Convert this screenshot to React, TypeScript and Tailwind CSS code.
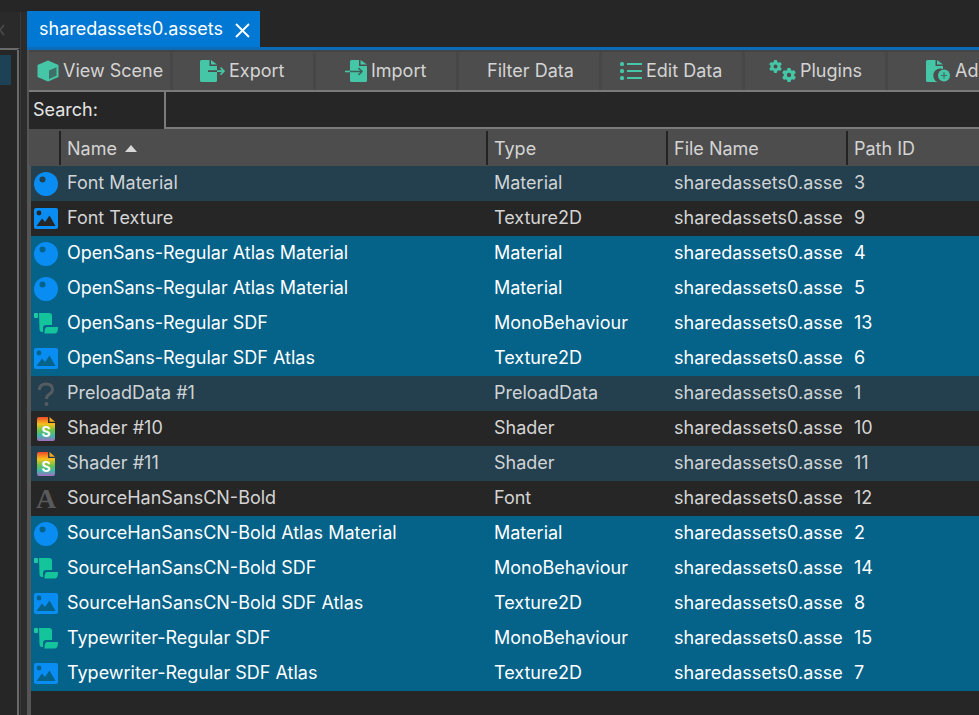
import React from "react";
import { FaGear } from "react-icons/fa6";

const G = "#45c7a7";
const BAR = "#4d4d4d";

const Cube = () => (
  <svg width="22" height="22" viewBox="0 0 22 22" className="shrink-0">
    <path d="M11 0.5 L21.5 5 V17 L11 21.5 L0.5 17 V5 Z" fill={G} />
    <path d="M12 10.5 L19.5 7.2 V15.8 L12 19 Z" fill="#3f6f66" />
  </svg>
);
const FileExport = () => (
  <svg width="25" height="22" viewBox="0 0 25 22" className="shrink-0">
    <path d="M0 1.5 A1.5 1.5 0 0 1 1.5 0 H9.5 V6 H17 V10.3 H8 V11.9 H17 V20.5 A1.5 1.5 0 0 1 15.5 22 H1.5 A1.5 1.5 0 0 1 0 20.5 Z" fill={G} />
    <path d="M11 0 L17 4.6 H11 Z" fill={G} />
    <path d="M17 11.1 H24 M20.5 7.6 L24 11.1 L20.5 14.6" stroke={G} strokeWidth="1.6" fill="none" />
  </svg>
);
const FileImport = () => (
  <svg width="22" height="22" viewBox="0 0 22 22" className="shrink-0">
    <path d="M5 1.5 A1.5 1.5 0 0 1 6.5 0 H14 V6 H22 V20.5 A1.5 1.5 0 0 1 20.5 22 H6.5 A1.5 1.5 0 0 1 5 20.5 Z" fill={G} />
    <path d="M15.5 0 L22 4.6 H15.5 Z" fill={G} />
    <path d="M5 11.5 H17 M13.5 8 L17 11.5 L13.5 15" stroke="#3f5f58" strokeWidth="1.6" fill="none" />
    <path d="M0 11.5 H5" stroke={G} strokeWidth="1.6" />
  </svg>
);
const ListIcon = () => (
  <svg width="22" height="18" viewBox="0 0 22 18" className="shrink-0">
    <rect x="0" y="0" width="4" height="4" rx="1.5" fill={G} />
    <rect x="0" y="7" width="4" height="4" rx="1.5" fill={G} />
    <rect x="0" y="14" width="4" height="4" rx="1.5" fill={G} />
    <rect x="7" y="1" width="15" height="2" fill={G} />
    <rect x="7" y="8" width="15" height="2" fill={G} />
    <rect x="7" y="15" width="15" height="2" fill={G} />
  </svg>
);
const Gears = () => (
  <span className="relative block h-[24px] w-[28px] shrink-0" style={{ color: G }}>
    <FaGear size={13} className="absolute left-0 top-[1px]" />
    <FaGear size={14} className="absolute left-[13px] top-[9px]" />
  </span>
);
const FileAdd = () => (
  <svg width="25" height="22" viewBox="0 0 25 22" className="shrink-0">
    <path d="M0 1.5 A1.5 1.5 0 0 1 1.5 0 H9.5 V6 H17 V9 A6.5 6.5 0 0 0 11.5 22 H1.5 A1.5 1.5 0 0 1 0 20.5 Z" fill={G} />
    <path d="M11 0 L17 4.6 H11 Z" fill={G} />
    <circle cx="18" cy="15.5" r="6" fill={G} />
    <path d="M18 12.3 V18.7 M14.8 15.5 H21.2" stroke="#3f6f66" strokeWidth="1.2" />
  </svg>
);

const MaterialIcon = ({ bg }: { bg: string }) => (
  <svg width="24" height="24" viewBox="0 0 24 24">
    <circle cx="12" cy="12" r="12" fill="#0a8df2" />
    <circle cx="8.5" cy="7.5" r="3" fill={bg} />
  </svg>
);
const ImageIcon = ({ bg }: { bg: string }) => (
  <svg width="24" height="21" viewBox="0 0 24 21">
    <rect width="24" height="21" rx="2" fill="#0a8df2" />
    <circle cx="5" cy="5" r="2.4" fill={bg} />
    <path d="M2.5 18 L8 10.5 L11 14 L15.5 7.5 L21.5 18 Z" fill={bg} />
  </svg>
);
const ScriptIcon = () => (
  <svg width="24" height="21" viewBox="0 0 24 21">
    <rect x="0" y="0" width="4" height="5" rx="1" fill="#1fc7a3" />
    <path d="M5 0 H15 Q18 0 18 3 V12 H12 Q9 12 9 15 V19 H8 Q5.5 19 5.5 16 Z" fill="#14c59c" />
    <path d="M10.5 20.5 Q10.5 14 13 14 H24 Q24 20 21 20.5 Z" fill="#14c59c" />
  </svg>
);
const UnknownIcon = () => (
  <svg width="24" height="24" viewBox="0 0 24 24">
    <path d="M5.5 8 Q5.5 2 12 2 Q18.5 2 18.5 7.5 Q18.5 10.5 15 12.5 Q12.5 13.8 12.5 17" fill="none" stroke="#555c61" strokeWidth="3" />
    <circle cx="12.5" cy="22" r="2" fill="#555c61" />
  </svg>
);
const ShaderIcon = ({ id }: { id: string }) => (
  <svg width="18" height="24" viewBox="0 0 18 24">
    <defs>
      <linearGradient id={id} x1="0" y1="0" x2="0" y2="1">
        <stop offset="0" stopColor="#ef4a2a" />
        <stop offset="0.3" stopColor="#f5c21c" />
        <stop offset="0.55" stopColor="#6cc24a" />
        <stop offset="0.78" stopColor="#3fb6a8" />
        <stop offset="1" stopColor="#a66cc0" />
      </linearGradient>
    </defs>
    <path d="M0 2 A2 2 0 0 1 2 0 H11 V6 H18 V22 A2 2 0 0 1 16 24 H2 A2 2 0 0 1 0 22 Z" fill={`url(#${id})`} />
    <path d="M12.5 0 L18 4.8 H12.5 Z" fill="#f2a71e" />
    <text x="9" y="20" fontSize="14" fontWeight="700" textAnchor="middle" fill="#fff" fontFamily="Inter, sans-serif">S</text>
  </svg>
);
const FontIcon = () => (
  <span
    className="block w-[24px] text-center text-[28px] font-bold leading-[24px] text-[#5a5a5a]"
    style={{ fontFamily: "'Liberation Serif', serif" }}
  >
    A
  </span>
);

type Kind = "mat" | "img" | "script" | "q" | "shader" | "font";
type Row = { name: string; type: string; id: string; kind: Kind; sel: boolean; alt?: boolean };

const rows: Row[] = [
  { name: "Font Material", type: "Material", id: "3", kind: "mat", sel: false, alt: true },
  { name: "Font Texture", type: "Texture2D", id: "9", kind: "img", sel: false },
  { name: "OpenSans-Regular Atlas Material", type: "Material", id: "4", kind: "mat", sel: true },
  { name: "OpenSans-Regular Atlas Material", type: "Material", id: "5", kind: "mat", sel: true },
  { name: "OpenSans-Regular SDF", type: "MonoBehaviour", id: "13", kind: "script", sel: true },
  { name: "OpenSans-Regular SDF Atlas", type: "Texture2D", id: "6", kind: "img", sel: true },
  { name: "PreloadData #1", type: "PreloadData", id: "1", kind: "q", sel: false, alt: true },
  { name: "Shader #10", type: "Shader", id: "10", kind: "shader", sel: false },
  { name: "Shader #11", type: "Shader", id: "11", kind: "shader", sel: false, alt: true },
  { name: "SourceHanSansCN-Bold", type: "Font", id: "12", kind: "font", sel: false },
  { name: "SourceHanSansCN-Bold Atlas Material", type: "Material", id: "2", kind: "mat", sel: true },
  { name: "SourceHanSansCN-Bold SDF", type: "MonoBehaviour", id: "14", kind: "script", sel: true },
  { name: "SourceHanSansCN-Bold SDF Atlas", type: "Texture2D", id: "8", kind: "img", sel: true },
  { name: "Typewriter-Regular SDF", type: "MonoBehaviour", id: "15", kind: "script", sel: true },
  { name: "Typewriter-Regular SDF Atlas", type: "Texture2D", id: "7", kind: "img", sel: true },
];

const RowIcon = ({ row, idx }: { row: Row; idx: number }) => {
  const bg = row.sel ? "#056289" : row.alt ? "#243f4e" : "#262626";
  switch (row.kind) {
    case "mat":
      return <MaterialIcon bg={bg} />;
    case "img":
      return <ImageIcon bg={bg} />;
    case "script":
      return <ScriptIcon />;
    case "q":
      return <UnknownIcon />;
    case "shader":
      return <ShaderIcon id={`shader-${idx}`} />;
    default:
      return <FontIcon />;
  }
};

const tools: { label: string; icon: React.ReactNode; cls: string }[] = [
  { label: "View Scene", icon: <Cube />, cls: "w-[144px] pl-[8px] gap-[4px]" },
  { label: "Export", icon: <FileExport />, cls: "w-[143px] pl-[27px] gap-[4px]" },
  { label: "Import", icon: <FileImport />, cls: "w-[143px] pl-[29px] gap-[4px]" },
  { label: "Filter Data", icon: null, cls: "w-[143px] pl-[28px]" },
  { label: "Edit Data", icon: <ListIcon />, cls: "w-[143px] pl-[18px] gap-[4px]" },
  { label: "Plugins", icon: <Gears />, cls: "w-[143px] pl-[24px] gap-[3px]" },
  { label: "Ad", icon: <FileAdd />, cls: "w-[143px] pl-[38px] gap-[4px]" },
];

const headers = [
  { label: "Type", w: "w-[180px]" },
  { label: "File Name", w: "w-[180px]" },
  { label: "Path ID", w: "flex-1" },
];

export default function App() {
  return (
    <div
      className="flex h-[715px] w-[979px] overflow-hidden bg-[#262626] text-[18px] text-[#d4d4d4]"
      style={{ fontFamily: "Inter, 'Noto Sans', sans-serif" }}
    >
      {/* left sliver */}
      <div className="flex h-full w-[27px] shrink-0 pt-[12px]">
        <div className="flex w-[21px] shrink-0 flex-col border-r-[1px] border-[#3a3a3a]">
          <div className="flex h-[36px] w-full items-center bg-[#2a2a2a]">
            <svg width="5" height="12" viewBox="0 0 5 12" className="shrink-0">
              <path d="M4 1 L0 6 L4 11" fill="none" stroke="#4c4c4c" strokeWidth="1.5" />
            </svg>
          </div>
          <div className="flex-1 w-[20px] border-t-[2px] border-r-[3px] border-r-[#262626] border-t-[#6a6a6a]">
            <div className="flex h-full w-[19px] border-r-[2px] border-[#6a6a6a]">
              <div className="mt-[5px] h-[30px] w-[11px] bg-[#1d4255]" />
            </div>
          </div>
        </div>
        <div className="flex-1 bg-[#2c2c2c]" />
      </div>

      {/* main */}
      <div className="flex min-w-0 flex-1 flex-col pt-[11px]">
        <div className="flex h-[36px] shrink-0">
          <div className="flex w-[233px] items-center gap-[12px] bg-[#0078d4] pl-[12px] text-white">
            <span className="pb-[2px]">sharedassets0.assets</span>
            <svg width="15" height="15" viewBox="0 0 15 15" className="mt-[3px] shrink-0">
              <path d="M1 1 L14 14 M14 1 L1 14" stroke="#fff" strokeWidth="1.9" />
            </svg>
          </div>
        </div>
        <div className="h-[3px] shrink-0 bg-[#0c6cb8]" />
        <div className="flex flex-1 flex-col border-l-[2px] border-[#555555]">
          <div
            className="flex h-[42px] shrink-0 overflow-hidden border-y-[2px] border-t-[#444444] border-b-[#7a7a7a]"
            style={{ backgroundColor: BAR }}
          >
            {tools.map((t) => (
              <div
                key={t.label}
                className={`flex h-full shrink-0 items-center justify-start border-r-[3px] border-[#474747] ${t.cls}`}
              >
                {t.icon}
                <span className="pb-[2px]">{t.label}</span>
              </div>
            ))}
          </div>
          <div className="flex h-[37px] shrink-0 bg-[#262626]">
            <div className="flex w-[135px] items-center pb-[2px] pl-[4px] text-[#e4e4e4]">Search:</div>
            <div className="flex-1 border-l-[2px] border-b-[2px] border-[#7a7a7a]" />
          </div>
          <div className="flex h-[37px] shrink-0 bg-[#4d4d4d] pt-[2px] pb-[1px]">
            <div className="w-[32px] shrink-0 border-r-[2px] border-[#232323]" />
            <div className="flex w-[427px] shrink-0 items-center gap-[8px] border-r-[2px] border-[#232323] pl-[6px]">
              <span>Name</span>
              <svg width="12" height="7" viewBox="0 0 12 7">
                <path d="M6 0 L12 7 H0 Z" fill="#d8d8d8" />
              </svg>
            </div>
            {headers.map((h) => (
              <div
                key={h.label}
                className={`flex items-center pl-[6px] ${h.w} ${h.label !== "Path ID" ? "shrink-0 border-r-[2px] border-[#232323]" : ""}`}
              >
                {h.label}
              </div>
            ))}
          </div>
          <div className="flex flex-1 flex-col border-l-[2px] border-[#555555]">
            {rows.map((r, i) => (
              <div
                key={i}
                className={`flex h-[35px] shrink-0 items-center ${
                  r.sel ? "bg-[#056289] text-white" : r.alt ? "bg-[#243f4e] text-[#cfd4d6]" : "bg-[#262626] text-[#d4d4d4]"
                }`}
              >
                <div className="w-[36px] shrink-0 pl-[3px]">
                  <div className="flex w-[24px] justify-center">
                    <RowIcon row={r} idx={i} />
                  </div>
                </div>
                <div className="w-[427px] shrink-0 truncate pb-[2px]">{r.name}</div>
                <div className="w-[180px] shrink-0 pb-[2px]">{r.type}</div>
                <div className="w-[180px] shrink-0 pb-[2px]">sharedassets0.asse</div>
                <div className="pb-[2px]">{r.id}</div>
              </div>
            ))}
          </div>
        </div>
      </div>
    </div>
  );
}
